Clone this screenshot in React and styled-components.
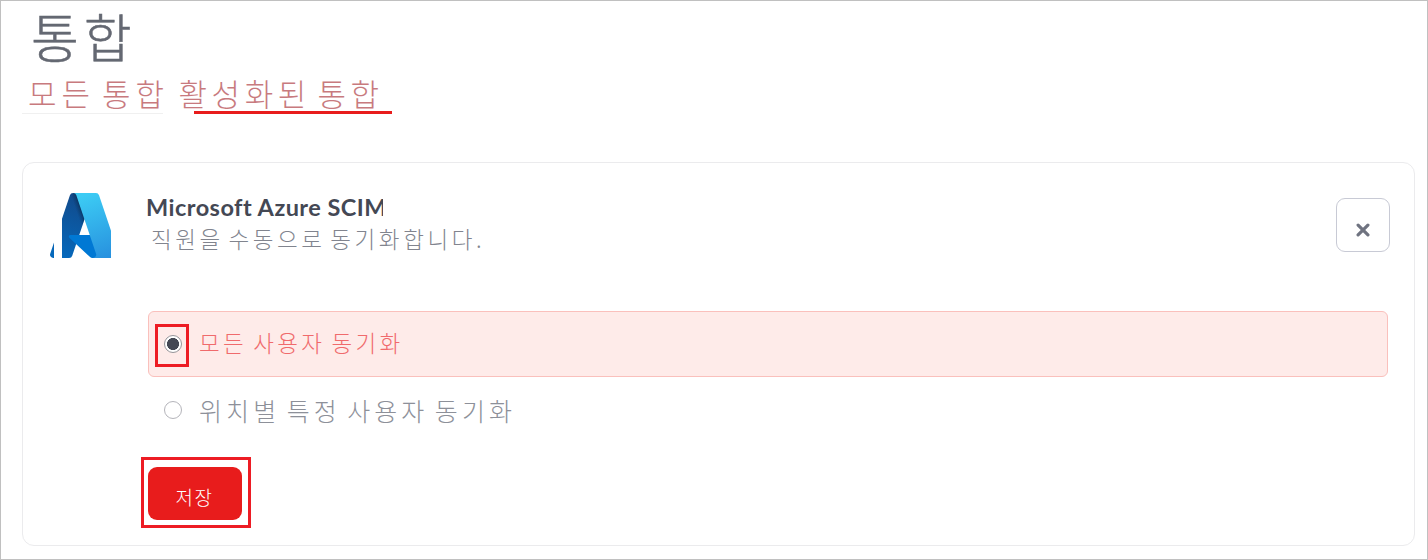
import React from "react";
import styled, { createGlobalStyle } from "styled-components";

const GlobalStyle = createGlobalStyle`
  *, *::before, *::after { box-sizing: border-box; }
  body { margin: 0; background: #fff; }
`;

const korean = `"Noto Sans CJK KR", sans-serif`;

const Page = styled.main`
  width: 1428px;
  height: 560px;
  border: 1px solid #c0c0c0;
  padding: 5px 12px 13px 21px;
  display: flex;
  flex-direction: column;
  overflow: hidden;
  font-family: ${korean};
  font-weight: 300;
  white-space: nowrap;
`;

const Title = styled.h1`
  margin: 0;
  padding-left: 9px;
  height: 64px;
  line-height: 60px;
  font-size: 52px;
  font-weight: 300;
  letter-spacing: 5px;
  color: #646872;
  -webkit-text-stroke: 0.5px #646872;
`;

const Tabs = styled.nav`
  display: flex;
  height: 44px;
  gap: 31px;
`;

const Tab = styled.a`
  width: ${(p) => p.$width}px;
  border-bottom: ${(p) => (p.$active ? "3px solid #e81c1c" : "1px solid #f0f0f0")};
  height: 44px;
  line-height: 46px;
  font-size: 31px;
  letter-spacing: ${(p) => (p.$active ? 4.6 : 5)}px;
  word-spacing: -5px;
  text-indent: ${(p) => p.$indent}px;
  color: #c87a7e;
`;

const Card = styled.section`
  flex: 1;
  margin-top: 48px;
  border: 1px solid #ebebed;
  border-radius: 12px;
  padding: 30px 24px 0 27px;
  display: flex;
  flex-direction: column;
`;

const CardHeader = styled.header`
  display: flex;
  height: 118px;
`;

const Logo = styled.svg`
  width: 61px;
  height: 65px;
  flex: none;
`;

const Heading = styled.div`
  margin-left: 35px;
  flex: 1;
`;

const Name = styled.h2`
  margin: 0;
  width: 237px;
  overflow: hidden;
  height: 29px;
  line-height: 28px;
  font-family: Lato, sans-serif;
  font-size: 23.5px;
  font-weight: 700;
  letter-spacing: 0.47px;
  color: #444854;
`;

const Description = styled.p`
  margin: 0;
  padding-left: 5px;
  height: 34px;
  line-height: 32px;
  font-size: 22.5px;
  letter-spacing: 3.6px;
  word-spacing: -4px;
  color: #81848e;
`;

const CloseButton = styled.button`
  width: 54px;
  height: 54px;
  margin-top: 5px;
  padding: 9px 1px 0 0;
  border: 1.5px solid #c8cad5;
  border-radius: 9px;
  background: #fff;
  display: flex;
  align-items: center;
  justify-content: center;
`;

const Form = styled.form`
  margin-left: 98px;
  width: 1240px;
`;

const Option = styled.label`
  display: flex;
  align-items: center;
  height: 66px;
  padding-left: 15px;
  border: 1px solid ${(p) => (p.$selected ? "#fac0bc" : "transparent")};
  border-radius: 6px;
  background: ${(p) => (p.$selected ? "#feebe9" : "transparent")};
`;

const RadioSlot = styled.span`
  position: relative;
  display: flex;
`;

const Radio = styled.span`
  width: 18px;
  height: 18px;
  border: 1.5px solid ${(p) => (p.$checked ? "#95959a" : "#b4b4ba")};
  border-radius: 50%;
  background: ${(p) => (p.$checked ? "radial-gradient(circle, #444854 5.7px, #fff 6.3px)" : "#fff")};
`;

const Highlight = styled.span`
  position: absolute;
  inset: ${(p) => p.$inset};
  border: 3px solid #ed1c24;
  pointer-events: none;
`;

const OptionText = styled.span`
  margin-left: 17px;
  padding-bottom: ${(p) => (p.$selected ? 5 : 0)}px;
  line-height: 34px;
  font-size: ${(p) => (p.$selected ? 22.5 : 25)}px;
  letter-spacing: ${(p) => (p.$selected ? 3.3 : 4.1)}px;
  word-spacing: ${(p) => (p.$selected ? -2 : -3.3)}px;
  color: ${(p) => (p.$selected ? "#f06a6c" : "#8d9099")};
`;

const SaveSlot = styled.div`
  position: relative;
  width: 94px;
  margin-top: 24px;
`;

const SaveButton = styled.button`
  display: block;
  width: 94px;
  height: 53px;
  padding: 6px 1px 0 0;
  border: 0;
  border-radius: 9px;
  background: #e81c1c;
  color: #fff;
  font: 300 19px ${korean};
  letter-spacing: 1.5px;
`;

function AzureLogo() {
  return (
    <Logo viewBox="3.96 6.5 77.9 83">
      <defs>
        <linearGradient id="dark" x1="43" y1="12" x2="18" y2="89" gradientUnits="userSpaceOnUse">
          <stop offset="0" stopColor="#114a8b" />
          <stop offset="1" stopColor="#0669bc" />
        </linearGradient>
        <linearGradient id="fold" x1="51" y1="50" x2="45" y2="52" gradientUnits="userSpaceOnUse">
          <stop offset="0" stopOpacity=".3" />
          <stop offset=".3" stopOpacity=".18" />
          <stop offset="1" stopOpacity="0" />
        </linearGradient>
        <linearGradient id="light" x1="46" y1="10" x2="74" y2="89" gradientUnits="userSpaceOnUse">
          <stop offset="0" stopColor="#3ccbf4" />
          <stop offset="1" stopColor="#2892df" />
        </linearGradient>
      </defs>
      <path fill="url(#dark)" d="M33.338 6.544h26.038l-27.03 80.087a4.152 4.152 0 0 1-3.933 2.824H8.149a4.145 4.145 0 0 1-3.928-5.47L29.404 9.368a4.152 4.152 0 0 1 3.934-2.825z" />
      <path fill="url(#fold)" d="M33.338 6.544h26.038l-27.03 80.087a4.152 4.152 0 0 1-3.933 2.824H8.149z" />
      <path fill="#0078d4" d="M71.175 60.261h-41.29a1.911 1.911 0 0 0-1.305 3.309l26.532 24.764a4.171 4.171 0 0 0 2.846 1.121h23.38z" />
      <path fill="url(#light)" d="M66.595 9.364a4.145 4.145 0 0 0-3.928-2.82H33.648a4.146 4.146 0 0 1 3.928 2.82l25.184 74.62a4.146 4.146 0 0 1-3.928 5.472h29.02a4.146 4.146 0 0 0 3.927-5.472z" />
      <path fill="#fff" d="M9.07 6H19.29V90H9.07z" />
    </Logo>
  );
}

export default function App() {
  return (
    <>
      <GlobalStyle />
      <Page>
        <Title>통합</Title>
        <Tabs>
          <Tab $width={141} $indent={6}>모든 통합</Tab>
          <Tab $width={198} $indent={-15.5} $active>활성화된 통합</Tab>
        </Tabs>
        <Card>
          <CardHeader>
            <AzureLogo />
            <Heading>
              <Name>Microsoft Azure SCIM</Name>
              <Description>직원을 수동으로 동기화합니다.</Description>
            </Heading>
            <CloseButton type="button" aria-label="닫기">
              <svg width="14" height="14" viewBox="0 0 14 14" stroke="#6f7380" strokeWidth="3.2" strokeLinecap="round">
                <path d="M2.1 2.1 11.9 11.9M11.9 2.1 2.1 11.9" />
              </svg>
            </CloseButton>
          </CardHeader>
          <Form>
            <Option $selected>
              <RadioSlot>
                <Radio $checked />
                <Highlight $inset="-11px -7px -14px -9px" />
              </RadioSlot>
              <OptionText $selected>모든 사용자 동기화</OptionText>
            </Option>
            <Option>
              <RadioSlot>
                <Radio />
              </RadioSlot>
              <OptionText>위치별 특정 사용자 동기화</OptionText>
            </Option>
            <SaveSlot>
              <SaveButton type="button">저장</SaveButton>
              <Highlight $inset="-10px -9px -8px -7px" />
            </SaveSlot>
          </Form>
        </Card>
      </Page>
    </>
  );
}
